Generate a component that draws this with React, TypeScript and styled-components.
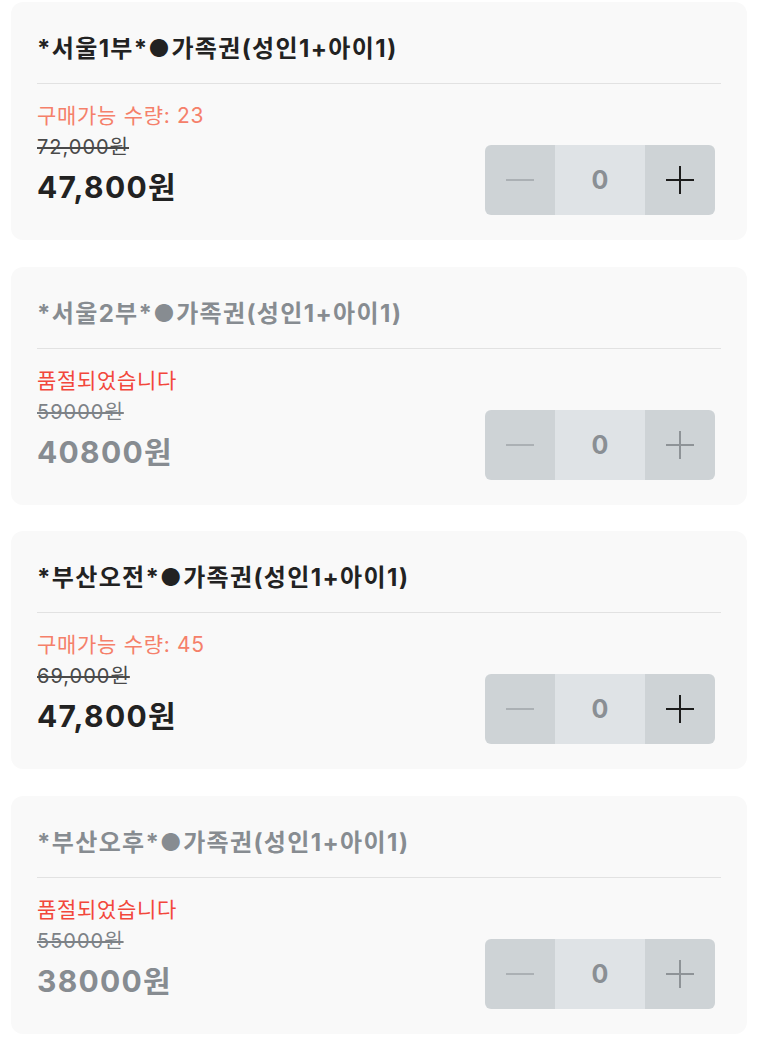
import styled, { createGlobalStyle } from "styled-components";

interface ITicket {
  id: number;
  title: string;
  stock: number;
  price: string;
  salePrice: string;
}

const tickets: ITicket[] = [
  { id: 1, title: "*서울1부*●가족권(성인1+아이1)", stock: 23, price: "72,000원", salePrice: "47,800원" },
  { id: 2, title: "*서울2부*●가족권(성인1+아이1)", stock: 0, price: "59000원", salePrice: "40800원" },
  { id: 3, title: "*부산오전*●가족권(성인1+아이1)", stock: 45, price: "69,000원", salePrice: "47,800원" },
  { id: 4, title: "*부산오후*●가족권(성인1+아이1)", stock: 0, price: "55000원", salePrice: "38000원" },
];

function MinusIcon({ color }: { color: string }): JSX.Element {
  return (
    <svg width="28" height="28" viewBox="0 0 28 28">
      <line x1="0" y1="14" x2="28" y2="14" stroke={color} strokeWidth="1.6" />
    </svg>
  );
}

function PlusIcon({ color }: { color: string }): JSX.Element {
  return (
    <svg width="28" height="28" viewBox="0 0 28 28">
      <line x1="0" y1="14" x2="28" y2="14" stroke={color} strokeWidth="2" />
      <line x1="14" y1="0" x2="14" y2="28" stroke={color} strokeWidth="2" />
    </svg>
  );
}

function App(): JSX.Element {
  return (
    <>
      <GlobalStyle />
      <List>
        {tickets.map((ticket) => {
          const soldOut = ticket.stock === 0;
          return (
            <Card key={ticket.id}>
              <Header>
                <Title $disabled={soldOut}>{ticket.title}</Title>
              </Header>
              <Body>
                <Info>
                  <Stock $soldOut={soldOut}>
                    {soldOut ? "품절되었습니다" : `구매가능 수량: ${ticket.stock}`}
                  </Stock>
                  <OldPrice $disabled={soldOut}>{ticket.price}</OldPrice>
                  <Price $disabled={soldOut}>{ticket.salePrice}</Price>
                </Info>
                <Stepper>
                  <StepButton>
                    <MinusIcon color="#9fa4a8" />
                  </StepButton>
                  <Count>0</Count>
                  <StepButton>
                    <PlusIcon color={soldOut ? "#8e9397" : "#1c1c1c"} />
                  </StepButton>
                </Stepper>
              </Body>
            </Card>
          );
        })}
      </List>
    </>
  );
}

export default App;

const GlobalStyle = createGlobalStyle`
  body {
    margin: 0;
    background: #ffffff;
    font-family: Inter, "Noto Sans CJK KR", sans-serif;
  }
`;

const List = styled.div`
  display: flex;
  flex-direction: column;
  gap: 26.6px;
  padding: 2px 15px 0 11px;
`;

const Card = styled.div`
  background: #f9f9f9;
  border-radius: 12px;
  padding: 0 26px;
`;

const Header = styled.div`
  padding: 32px 0 19px;
  border-bottom: 1px solid #e2e2e2;
`;

const Title = styled.div<{ $disabled: boolean }>`
  font-size: 24px;
  line-height: 30px;
  font-weight: 700;
  letter-spacing: 1.35px;
  color: ${(p) => (p.$disabled ? "#878c91" : "#222222")};
`;

const Body = styled.div`
  display: flex;
  justify-content: space-between;
  align-items: flex-end;
  padding: 19px 6px 23px 0;
`;

const Info = styled.div`
  display: flex;
  flex-direction: column;
`;

const Stock = styled.div<{ $soldOut: boolean }>`
  font-size: 21px;
  line-height: 26px;
  letter-spacing: 0.7px;
  color: ${(p) => (p.$soldOut ? "#f2473b" : "#f5806a")};
`;

const OldPrice = styled.div<{ $disabled: boolean }>`
  margin-top: 4px;
  font-size: 20px;
  line-height: 28px;
  letter-spacing: 1px;
  text-decoration: line-through;
  color: ${(p) => (p.$disabled ? "#7d8287" : "#4a4a4a")};
`;

const Price = styled.div<{ $disabled: boolean }>`
  margin-top: 7px;
  margin-bottom: 11px;
  font-size: 30px;
  line-height: 38px;
  font-weight: 700;
  letter-spacing: 1.3px;
  color: ${(p) => (p.$disabled ? "#878c91" : "#222222")};
`;

const Stepper = styled.div`
  display: flex;
  height: 70px;
  margin-bottom: 2px;
  border-radius: 6px;
  overflow: hidden;
`;

const StepButton = styled.div`
  width: 70px;
  display: flex;
  align-items: center;
  justify-content: center;
  background: #ced3d6;
`;

const Count = styled.div`
  width: 90px;
  display: flex;
  align-items: center;
  justify-content: center;
  background: #dfe3e6;
  font-size: 25px;
  font-weight: 700;
  color: #8a8f94;
`;
